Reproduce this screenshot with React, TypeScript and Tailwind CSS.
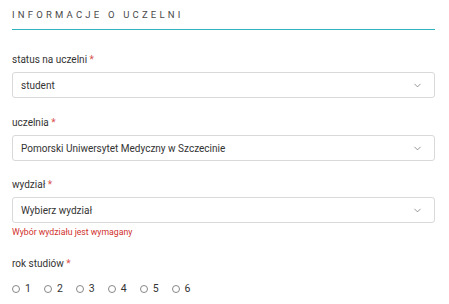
import { ChevronDown } from "lucide-react";

const font = { fontFamily: "Roboto, 'Noto Sans', sans-serif" };

function Label({ text }: { text: string }) {
  return (
    <div className="text-[10px] leading-[14px] text-[#333]">
      {text} <span className="text-[#d9534f]">*</span>
    </div>
  );
}

function Select({ value }: { value: string }) {
  return (
    <div className="mt-[5px] h-[26px] rounded-[3px] border border-[#d9d9d9] bg-white flex items-center justify-between pl-[8px] pr-[11px]">
      <span className="text-[10px] text-[#333]">{value}</span>
      <ChevronDown size={11} strokeWidth={1.5} className="text-[#666]" />
    </div>
  );
}

export default function App() {
  return (
    <div className="w-[449px] h-[304px] bg-white pl-[12px] pr-[14px] pt-[8px]" style={font}>
      <div className="text-[9.5px] leading-[14px] tracking-[3.2px] text-[#4a4a4a] pb-[7px]">
        INFORMACJE O UCZELNI
      </div>
      <div className="h-px bg-[#2fb3bf]" />

      <div className="mt-[23px]">
        <Label text="status na uczelni" />
        <Select value="student" />
      </div>

      <div className="mt-[18px]">
        <Label text="uczelnia" />
        <Select value="Pomorski Uniwersytet Medyczny w Szczecinie" />
      </div>

      <div className="mt-[17px]">
        <Label text="wydział" />
        <Select value="Wybierz wydział" />
        <div className="mt-[3px] text-[8.7px] leading-[12px] text-[#d0302b]">
          Wybór wydziału jest wymagany
        </div>
      </div>

      <div className="mt-[19px]">
        <Label text="rok studiów" />
        <div className="mt-[11px] flex items-center gap-[13px]">
          {["1", "2", "3", "4", "5", "6"].map((n) => (
            <label key={n} className="flex items-center gap-[5px] text-[10.5px] leading-[14px] text-[#333]">
              <span className="w-[8px] h-[8px] rounded-full border border-[#888] bg-white" />
              {n}
            </label>
          ))}
        </div>
      </div>
    </div>
  );
}
